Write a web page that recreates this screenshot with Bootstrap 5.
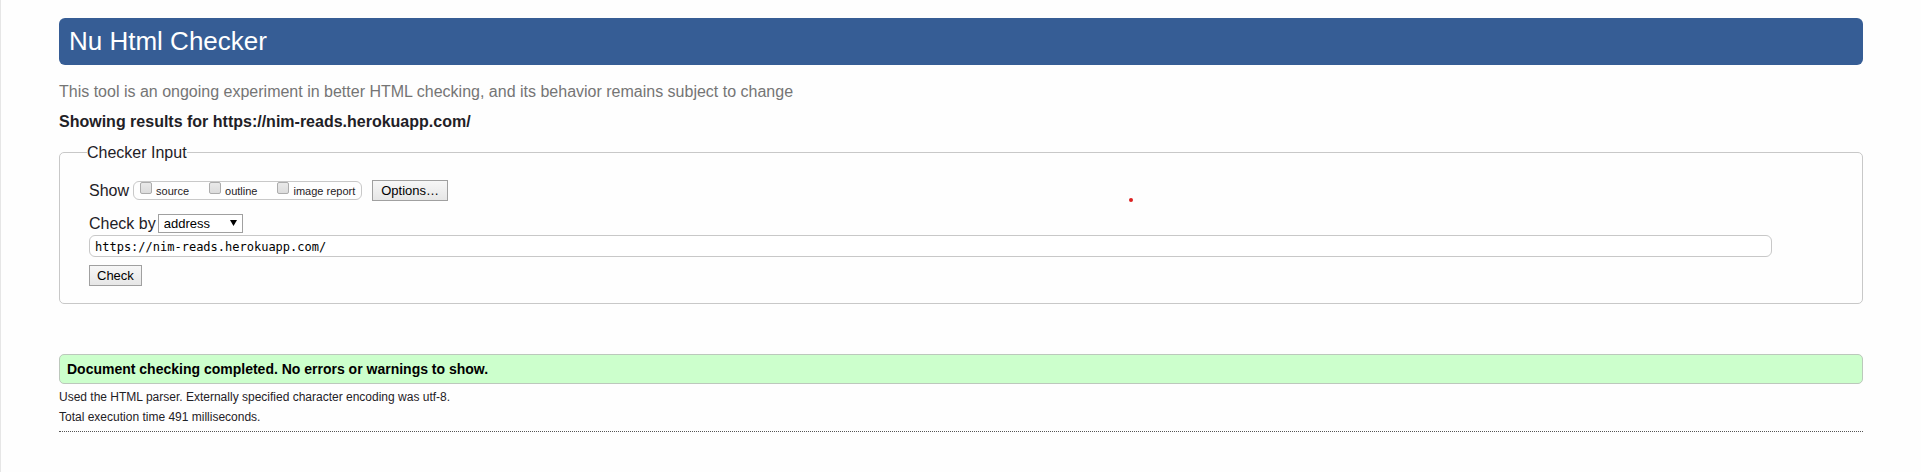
<!DOCTYPE html>
<html lang="en">
<head>
<meta charset="utf-8">
<meta name="viewport" content="width=device-width, initial-scale=1">
<title>Nu Html Checker</title>
<link rel="stylesheet" href="https://cdn.jsdelivr.net/npm/bootstrap@5.3.0/dist/css/bootstrap.min.css">
<style>
body { font-family: "Liberation Sans", Arial, sans-serif; font-size: 16px; line-height: 20px; color: #1f2126; background: #fefefe; }
.page { border-left: 1px solid #e6e6e6; padding: 18px 58px 0; }
.title-bar { background: #365d95; border-radius: 6px; padding: 8px 10px 9px; }
.title-bar h1 { font-size: 26px; line-height: 30px; font-weight: 400; }
.tagline { color: #757575; margin: 17px 0 10px; }
.results-for { font-size: 16px; line-height: 20px; font-weight: 700; margin-bottom: 9px; }
.checker { border: 1px solid #c8c8c8; border-radius: 5px; padding: 17px 29px; margin-bottom: 50px; }
.checker legend { float: none; width: auto; font-size: 16px; line-height: 20px; margin: 0 0 0 -2px; padding: 2px 0 0; }
.show-row { gap: 10px; margin-bottom: 13px; }
.option-box { border: 1px solid #c8c8c8; border-radius: 6px; height: 19px; padding: 0 6px; gap: 20px; font-size: 11px; line-height: 14px; }
.option-box label { padding-top: 2px; }
.option-box input { appearance: none; width: 12px; height: 12px; margin: 0; border: 1px solid #acacac; border-radius: 2px; background: linear-gradient(#e9e9e9, #dcdcdc); }
.option-box input:checked { background: #365d95; }
.tool-btn { height: 21px; padding: 0 8px; border: 1px solid #a0a0a0; border-radius: 0; background: linear-gradient(#f7f7f7, #e6e6e6); color: #000; font-size: 13px; line-height: 18px; }
.check-btn { padding: 0 7px; }
.method-row { gap: 2px; margin-bottom: 1px; }
.method { width: 85px; height: 19px; padding: 0 5px; border: 1px solid #a0a0a0; border-radius: 0; background: #fff; color: #000; font-size: 13px; line-height: 17px; appearance: none; }
.arrow { width: 7px; height: 6px; right: 6px; top: 6px; pointer-events: none; }
.address { display: block; width: 96.5%; height: 22px; padding: 1px 5px 0; border: 1px solid #c8c8c8; border-radius: 6px; background: #fff; color: #000; font: 12px/18px "DejaVu Sans Mono", monospace; }
.pointer-dot { width: 4px; height: 4px; left: 59.3%; top: 35px; background: #dc2121; }
.success { background: #cfc; border: 1px solid #bcc8bc; border-radius: 5px; padding: 5px 7px; color: #000; font-size: 14px; line-height: 18px; font-weight: 700; margin: 0 0 3px; }
.details { font-size: 12px; line-height: 20px; margin: 0; }
.end-rule { border: 0; border-top: 1px dotted #555; opacity: 1; margin: 4px 0 0; }
</style>
</head>
<body>
<div class="page min-vh-100">
  <header class="title-bar text-white"><h1 class="m-0">Nu Html Checker</h1></header>
  <main>
    <p class="tagline">This tool is an ongoing experiment in better HTML checking, and its behavior remains subject to change</p>
    <h2 class="results-for">Showing results for https://nim-reads.herokuapp.com/</h2>
    <form>
      <fieldset class="checker position-relative">
        <legend>Checker Input</legend>
        <div class="show-row d-flex align-items-center">
          <div class="d-flex align-items-center gap-1">
            <span>Show</span>
            <div class="option-box d-flex">
              <div class="d-flex gap-1"><input type="checkbox" id="source"><label for="source">source</label></div>
              <div class="d-flex gap-1"><input type="checkbox" id="outline"><label for="outline">outline</label></div>
              <div class="d-flex gap-1"><input type="checkbox" id="images"><label for="images">image report</label></div>
            </div>
          </div>
          <button type="button" class="tool-btn">Options…</button>
        </div>
        <div class="method-row d-flex">
          <label for="method">Check by</label>
          <div class="position-relative d-flex align-items-start">
            <select id="method" class="method"><option>address</option><option>file upload</option><option>text input</option></select>
            <svg class="arrow position-absolute" viewBox="0 0 7 6" aria-hidden="true"><path d="M0 0H7L3.5 6Z"/></svg>
          </div>
        </div>
        <input type="text" class="address" aria-label="Address" value="https://nim-reads.herokuapp.com/" spellcheck="false">
        <button type="button" class="tool-btn check-btn d-block mt-2">Check</button>
        <span class="pointer-dot position-absolute rounded-circle"></span>
      </fieldset>
    </form>
    <p class="success">Document checking completed. No errors or warnings to show.</p>
    <p class="details">Used the HTML parser. Externally specified character encoding was utf-8.</p>
    <p class="details">Total execution time 491 milliseconds.</p>
    <hr class="end-rule">
  </main>
</div>
<script src="https://cdn.jsdelivr.net/npm/bootstrap@5.3.0/dist/js/bootstrap.bundle.min.js"></script>
</body>
</html>
